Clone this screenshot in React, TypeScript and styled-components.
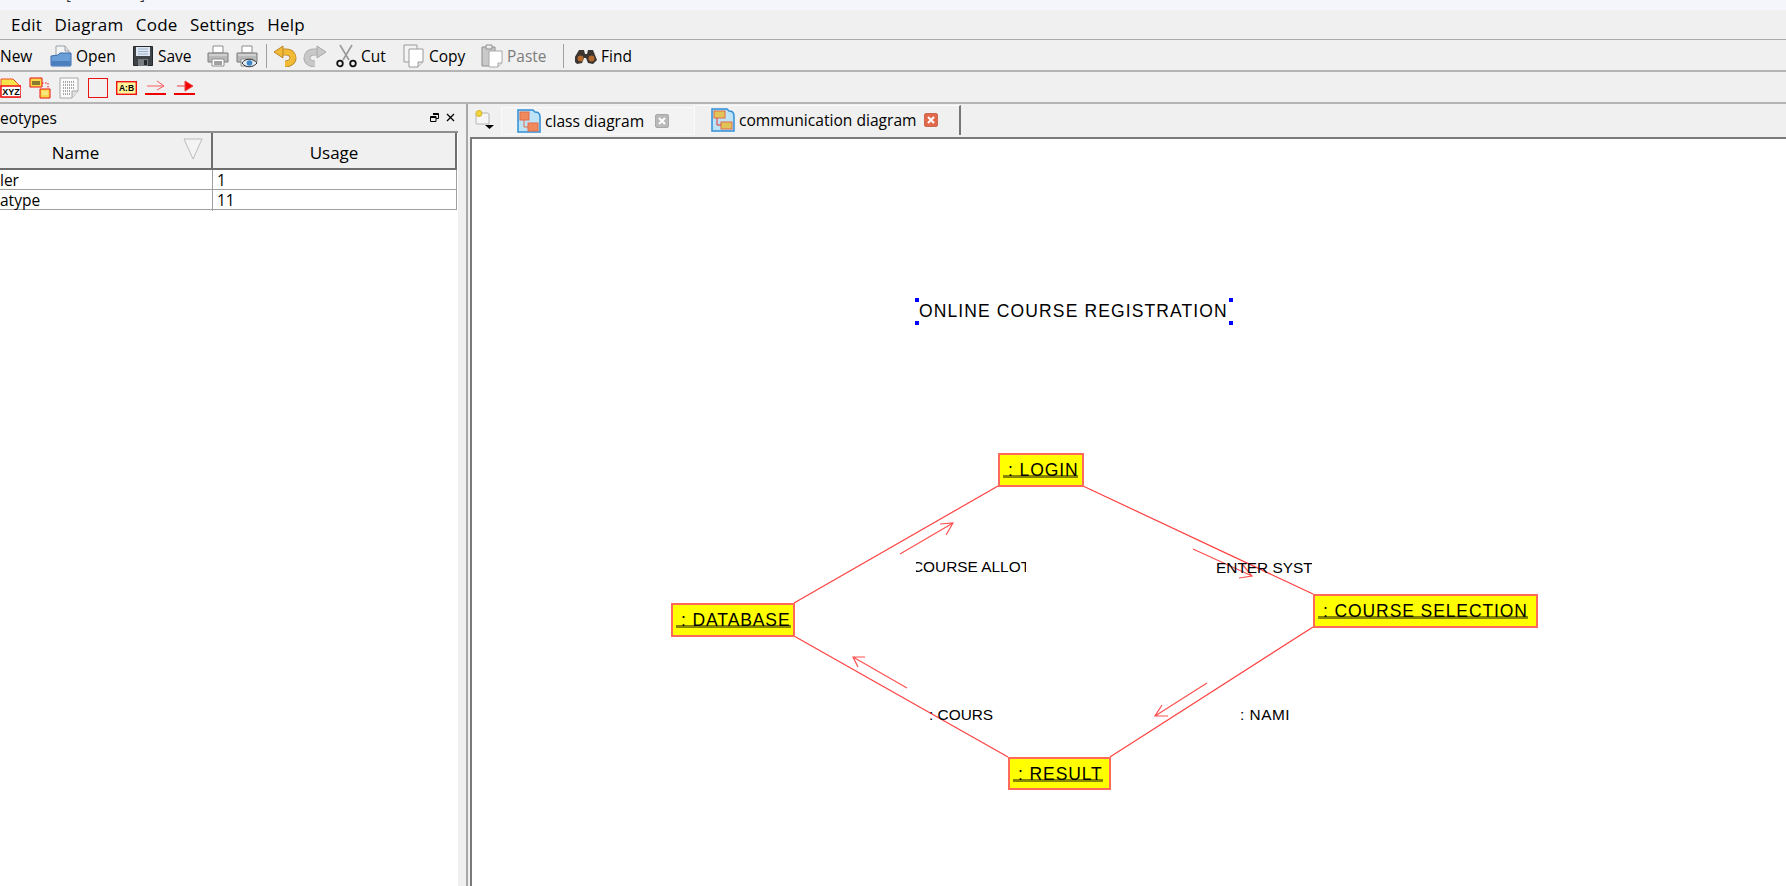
import React from 'react';
import styled, { createGlobalStyle } from 'styled-components';

const GlobalStyle = createGlobalStyle`
  *, *::before, *::after { box-sizing: border-box; }
  html, body { margin: 0; padding: 0; background: #f0f0f0; }
  body { font-family: "Open Sans", "Noto Sans", sans-serif; color: #000; overflow: hidden; }
`;

const Shell = styled.div`
  width: 1786px;
  height: 886px;
  display: flex;
  flex-direction: column;
  overflow: hidden;
`;

const TitleBar = styled.div`
  height: 10px;
  flex: none;
  background: #f5f6fb;
  padding-left: 66px;
  overflow: hidden;
  font-size: 15px;
  line-height: 4px;
  display: flex;
  gap: 69px;
  color: #333;
  span { display: block; margin-top: -9px; }
`;

const MenuBar = styled.div`
  height: 30px;
  flex: none;
  display: flex;
  align-items: center;
  padding-left: 11px;
  gap: 12.5px;
  font-size: 17px;
  letter-spacing: 0.2px;
  border-bottom: 1px solid #a9a9a9;
`;

const ToolRow = styled.div<{ $h: number }>`
  height: ${p => p.$h}px;
  flex: none;
  display: flex;
  align-items: center;
  padding-top: 2px;
  border-bottom: 2px solid #b4b4b4;
`;

const ToolButton = styled.div<{ $w: number; $off?: boolean }>`
  width: ${p => p.$w}px;
  flex: none;
  display: flex;
  align-items: center;
  gap: 4px;
  font-size: 15.5px;
  color: ${p => (p.$off ? '#7d7d7d' : '#000')};
  svg { flex: none; }
`;

const ToolSep = styled.div<{ $w: number }>`
  width: ${p => p.$w}px;
  flex: none;
  height: 24px;
  position: relative;
  &::after {
    content: '';
    position: absolute;
    left: 0;
    top: 0;
    bottom: 0;
    width: 1px;
    background: #a0a0a0;
  }
`;

const ShapeRow = styled.div`
  display: flex;
  align-items: center;
  gap: 8px;
  svg { flex: none; }
`;

const Workspace = styled.div`
  flex: 1;
  display: flex;
  min-height: 0;
`;

const SidePanel = styled.div`
  width: 458px;
  flex: none;
  display: flex;
  flex-direction: column;
`;

const PanelHeader = styled.div`
  height: 27px;
  flex: none;
  display: flex;
  align-items: center;
  justify-content: space-between;
  padding-right: 3px;
  font-size: 15.5px;
`;

const PanelButtons = styled.div`
  display: flex;
  align-items: center;
  gap: 7px;
`;

const PanelBody = styled.div`
  flex: 1;
  background: #fff;
  border-top: 2px solid #8e8e8e;
  padding-right: 1px;
`;

const TableRow = styled.div<{ $head?: boolean }>`
  display: grid;
  grid-template-columns: 213px 1fr;
  height: ${p => (p.$head ? 37 : 20)}px;
  background: ${p => (p.$head ? '#f0f0f0' : '#fff')};
  border-bottom: ${p => (p.$head ? '2px solid #6e6e6e' : '1px solid #a0a0a0')};
  border-right: ${p => (p.$head ? '2px solid #6e6e6e' : '1px solid #a0a0a0')};
  font-size: 15.5px;
`;

const HeadCell = styled.div<{ $first?: boolean }>`
  position: relative;
  display: flex;
  align-items: center;
  justify-content: center;
  padding-top: 3px;
  padding-right: ${p => (p.$first ? 60 : 0)}px;
  border-right: ${p => (p.$first ? '2px solid #6e6e6e' : 'none')};
  font-size: 17px;
  svg { position: absolute; right: 8px; top: 5px; }
`;

const BodyCell = styled.div<{ $first?: boolean }>`
  padding-left: ${p => (p.$first ? 0 : 4)}px;
  line-height: 21px;
  border-right: ${p => (p.$first ? '1px solid #a0a0a0' : 'none')};
`;

const Splitter = styled.div`
  width: 12px;
  flex: none;
  position: relative;
  &::after {
    content: '';
    position: absolute;
    left: 8px;
    top: 0;
    bottom: 0;
    width: 2px;
    background: #a8a8a8;
  }
`;

const Editor = styled.div`
  flex: 1;
  display: flex;
  flex-direction: column;
  min-width: 0;
`;

const TabStrip = styled.div`
  height: 33px;
  flex: none;
  display: flex;
  align-items: flex-end;
  padding-bottom: 2px;
`;

const NewTabButton = styled.div`
  width: 31px;
  height: 30px;
  flex: none;
  display: flex;
  align-items: center;
  padding-left: 5px;
`;

const Tab = styled.div<{ $active?: boolean; $w: number }>`
  width: ${p => p.$w}px;
  height: ${p => (p.$active ? 30 : 28)}px;
  flex: none;
  display: flex;
  align-items: center;
  padding-left: ${p => (p.$active ? 16 : 15)}px;
  padding-bottom: ${p => (p.$active ? 2 : 0)}px;
  gap: 4px;
  font-size: 15.6px;
  background: ${p => (p.$active ? '#f0f0f0' : '#f3f3f3')};
  border-left: 1px solid #fafafa;
  border-top: 1px solid #fafafa;
  border-bottom: ${p => (p.$active ? 'none' : '1px solid #fafafa')};
  border-right: ${p => (p.$active ? '2px solid #777' : 'none')};
`;

const TabClose = styled.div<{ $active?: boolean }>`
  width: 14px;
  height: 14px;
  flex: none;
  border-radius: 2px;
  background: ${p => (p.$active ? '#e2694a' : '#b9b9b9')};
  border: 1px solid ${p => (p.$active ? '#c9694f' : '#a8a8a8')};
  display: flex;
  align-items: center;
  justify-content: center;
  margin-left: ${p => (p.$active ? 3 : 7)}px;
`;

const Canvas = styled.div`
  flex: 1;
  position: relative;
  background: #fff;
  border-top: 2px solid #7a7a7a;
  border-left: 2px solid #7a7a7a;
  overflow: hidden;
`;

// canvas origin in page coordinates, the diagram numbers below are taken from the picture
const OX = 472;
const OY = 139;

const Wires = styled.svg`
  position: absolute;
  left: 0;
  top: 0;
`;

const Node = styled.div<{ $x: number; $y: number; $w: number; $h: number }>`
  position: absolute;
  left: ${p => p.$x - OX}px;
  top: ${p => p.$y - OY}px;
  width: ${p => p.$w}px;
  height: ${p => p.$h}px;
  background: #ffff00;
  border: 2px solid #ff6a5a;
  padding-left: 3px;
  font-family: "Liberation Sans", Arial, sans-serif;
  font-size: 17.5px;
  letter-spacing: 0.9px;
  line-height: 30px;
  white-space: nowrap;
  overflow: hidden;
`;

const NodeName = styled.span`
  display: inline-block;
  vertical-align: top;
  padding-left: 5px;
  height: 23px;
  border-bottom: 3px solid #858500;
`;

const Caption = styled.div`
  position: absolute;
  left: ${919 - OX}px;
  top: ${299 - OY}px;
  font-family: "Liberation Sans", Arial, sans-serif;
  font-size: 17.5px;
  letter-spacing: 1.12px;
  line-height: 24px;
  white-space: nowrap;
`;

const Handle = styled.div<{ $x: number; $y: number }>`
  position: absolute;
  left: ${p => p.$x - OX}px;
  top: ${p => p.$y - OY}px;
  width: 4px;
  height: 4px;
  background: #0000ff;
`;

const Message = styled.div<{ $x: number; $y: number; $w: number; $track?: number }>`
  position: absolute;
  left: ${p => p.$x - OX}px;
  top: ${p => p.$y - OY}px;
  width: ${p => p.$w}px;
  height: 20px;
  overflow: hidden;
  font-family: "Liberation Sans", Arial, sans-serif;
  font-size: 15.4px;
  letter-spacing: ${p => p.$track ?? 0}px;
  line-height: 20px;
  white-space: nowrap;
`;

const ClippedStart = styled.span`
  margin-left: -4px;
`;

const OpenIcon = () => (
  <svg width="22" height="24" viewBox="0 0 22 24">
    <path d="M6 2h9l4 5v6H6z" fill="#f4f4f4" stroke="#9aa0a8" />
    <path d="M15 2v5h4" fill="#dfe3e8" stroke="#9aa0a8" />
    <path d="M1 12l7-1 2-2 11 0v12a1 1 0 0 1-1 1H2a1 1 0 0 1-1-1z" fill="#6a9ed6" stroke="#3a6cae" />
    <path d="M2 17h18v4H2z" fill="#4a7fbe" />
  </svg>
);

const SaveIcon = () => (
  <svg width="21" height="22" viewBox="0 0 21 22">
    <path d="M.5 1.500h19v19H.5z" fill="#3e4348" stroke="#26292c" />
    <path d="M3 2h14v9H3z" fill="#dfe7f2" />
    <path d="M5 4h10M5 6.500h10M5 9h10" stroke="#9db4d0" />
    <path d="M5 14h10v7H5z" fill="#787d83" />
    <path d="M11 15h3v5h-3z" fill="#25282b" />
  </svg>
);

const PrintIcon = ({ eye }: { eye?: boolean }) => (
  <svg width="24" height="24" viewBox="0 0 24 24">
    <path d="M7 2h10v7H7z" fill="#fff" stroke="#8d8d8d" />
    <path d="M2 9h20v9H2z" fill="#b9b9b9" stroke="#7c7c7c" />
    <path d="M3 11h18" stroke="#e6e6e6" />
    <path d="M6 15h12v7H6z" fill="#fff" stroke="#8d8d8d" />
    <path d="M8 18h8M8 20h8" stroke="#444" />
    {eye && (
      <>
        <path d="M7 19c3-5 11-5 15 0-4 5-12 5-15 0z" fill="#dfeaf5" stroke="#333" />
        <circle cx="14.500" cy="19" r="2.800" fill="#3e86c6" />
      </>
    )}
  </svg>
);

const TurnIcon = ({ flip, off }: { flip?: boolean; off?: boolean }) => (
  <svg width="24" height="22" viewBox="0 0 24 22" fill="none" style={flip ? { transform: 'scaleX(-1)' } : undefined}>
    <path d="M10 7h3c5 0 7 3 7 6s-3 6-8 6" stroke={off ? '#a8a8a8' : '#b9852a'} strokeWidth="7" />
    <path d="M10 7h3c5 0 7 3 7 6s-3 6-8 6" stroke={off ? '#c8c8c8' : '#f2bb35'} strokeWidth="5.400" />
    <path d="M1 7l9-6v12z" fill={off ? '#c8c8c8' : '#f2bb35'} stroke={off ? '#a8a8a8' : '#b9852a'} />
  </svg>
);

const CutIcon = () => (
  <svg width="22" height="24" viewBox="0 0 22 24" fill="none">
    <path d="M5 1l9 15M17 1l-9 15" stroke="#9a9a9a" strokeWidth="1.600" />
    <circle cx="5" cy="19.500" r="2.800" stroke="#111" strokeWidth="1.800" />
    <circle cx="18" cy="19.500" r="2.800" stroke="#111" strokeWidth="1.800" />
  </svg>
);

const CopyIcon = () => (
  <svg width="22" height="24" viewBox="0 0 22 24">
    <path d="M1 1h13v17H1z" fill="#f4f4f4" stroke="#9a9a9a" />
    <path d="M6 5h14v13l-5 5H6z" fill="#fff" stroke="#9a9a9a" />
    <path d="M15 23v-5h5" fill="#e3e3e3" stroke="#9a9a9a" />
  </svg>
);

const PasteIcon = () => (
  <svg width="22" height="24" viewBox="0 0 22 24">
    <path d="M1 3h13v19H1z" fill="#c9c9c9" stroke="#8f8f8f" />
    <path d="M5 1h6v4H5z" fill="#ececec" stroke="#8f8f8f" />
    <path d="M8 7h13v12l-4 4H8z" fill="#fff" stroke="#a8a8a8" />
    <path d="M17 23v-4h4" fill="#e3e3e3" stroke="#a8a8a8" />
  </svg>
);

const FindIcon = () => (
  <svg width="22" height="16" viewBox="0 0 22 16">
    <path d="M4 2h5l1 4h2l1-4h5l4 10-4 4-5-1-2-5h-2l-2 5-5 1-4-4z" fill="#3a3531" />
    <circle cx="5.500" cy="10.500" r="3" fill="#b46a2c" />
    <circle cx="16.500" cy="10.500" r="3" fill="#b46a2c" />
  </svg>
);

const ObjectShape = () => (
  <svg width="21" height="20" viewBox="0 0 21 20">
    <path d="M1 1h12l7 7v11H1z" fill="#f7e44a" stroke="#f04a2a" />
    <path d="M1 8h20v11H1z" fill="#fff" stroke="#f01010" strokeWidth="1.500" />
    <text x="11" y="17" textAnchor="middle" fontFamily="Liberation Sans" fontWeight="700" fontSize="9">XYZ</text>
  </svg>
);

const LinkedShape = () => (
  <svg width="22" height="22" viewBox="0 0 22 22">
    <path d="M1 1h12v9H1z" fill="#f5d94a" stroke="#f01010" />
    <path d="M11 12h10v9H11z" fill="#f5d94a" stroke="#f01010" />
    <path d="M3 4h8v4H3z" fill="#8a7a30" />
    <path d="M13 15h6M13 17h6" stroke="#fff5b0" />
    <path d="M13 6h6v6" fill="none" stroke="#f01010" strokeDasharray="1.500 1.500" />
  </svg>
);

const NoteShape = () => (
  <svg width="21" height="22" viewBox="0 0 21 22">
    <path d="M1 1h18v13l-6 7H1z" fill="#fafafa" stroke="#a8a8a8" />
    <path d="M13 21v-7h6" fill="#e1e1e1" stroke="#a8a8a8" />
    <path d="M4 5h11M4 8h11M4 11h11M4 14h7M4 17h7" stroke="#555" strokeDasharray="1 1" />
  </svg>
);

const BoxShape = () => (
  <svg width="20" height="20" viewBox="0 0 20 20">
    <rect x="0.500" y="0.500" width="19" height="19" fill="none" stroke="#f01010" />
  </svg>
);

const RoleShape = () => (
  <svg width="21" height="14" viewBox="0 0 21 14">
    <rect x="0.700" y="0.700" width="19.600" height="12.600" fill="#fff59a" stroke="#f01010" strokeWidth="1.400" />
    <text x="10.500" y="10" textAnchor="middle" fontFamily="Liberation Sans" fontWeight="700" fontSize="8.500">A:B</text>
  </svg>
);

const ArrowShape = ({ filled }: { filled?: boolean }) => (
  <svg width="21" height="16" viewBox="0 0 21 16" fill="none">
    {filled ? (
      <path d="M3 6h9M11 1l8 5-8 5z" fill="#f00000" stroke="#f04040" />
    ) : (
      <path d="M2 6h17M12 1l7 5-7 4" stroke="#ff5a5a" />
    )}
    <path d="M0 14h21" stroke="#f00000" strokeWidth="2" />
  </svg>
);

const DiagramTabIcon = ({ comm }: { comm?: boolean }) => (
  <svg width="24" height="24" viewBox="0 0 24 24">
    <path d="M1 1h15l2 2c3 0 5 2 5 5v15H1z" fill="#bfe3f6" stroke="#2f8fd6" strokeWidth="1.500" />
    {comm ? (
      <>
        <rect x="3" y="3" width="11" height="7" fill="#e0c458" stroke="#e26a4a" />
        <rect x="10" y="14" width="11" height="7" fill="#e0c458" stroke="#e26a4a" />
        <path d="M6 10v7h4" fill="none" stroke="#e23030" />
      </>
    ) : (
      <>
        <rect x="3" y="3" width="9" height="8" fill="#f08a5a" stroke="#e26a4a" />
        <rect x="11" y="14" width="10" height="8" fill="#f08a5a" stroke="#e26a4a" />
        <path d="M7 11v7h4" fill="none" stroke="#e26a4a" />
      </>
    )}
  </svg>
);

const NewDiagramIcon = () => (
  <svg width="20" height="20" viewBox="0 0 20 20">
    <path d="M2 3h11a2 2 0 0 1 1 2v9H2a1 1 0 0 1-1-1V4a1 1 0 0 1 1-1z" fill="#f6f6f6" stroke="#b4b4b4" />
    <circle cx="4" cy="3.500" r="3" fill="#f2d43c" stroke="#d7b52a" />
    <path d="M10 15h9l-4.500 4z" fill="#000" />
  </svg>
);

const CloseGlyph = () => (
  <svg width="8" height="8" viewBox="0 0 8 8">
    <path d="M1 1l6 6M7 1l-6 6" stroke="#fff" strokeWidth="2" />
  </svg>
);

const FloatIcon = () => (
  <svg width="9" height="9" viewBox="0 0 9 9" fill="none" stroke="#000">
    <path d="M3 .5h5.500v5h-2.500" />
    <path d="M3 1.500h5.500" />
    <path d="M.5 3.500h5.500v5h-5.500z" />
    <path d="M.5 4.500h5.500" />
  </svg>
);

const DockCloseIcon = () => (
  <svg width="9" height="9" viewBox="0 0 9 9" fill="none" stroke="#000" strokeWidth="1.300">
    <path d="M1 1l7 7M8 1l-7 7" />
  </svg>
);

const SortMark = () => (
  <svg width="20" height="22" viewBox="0 0 20 22" fill="none">
    <path d="M1 1h18l-9 20z" fill="#f4f4f4" stroke="#bcbcbc" />
  </svg>
);

const links = [
  [998, 486, 794, 603],
  [1083, 486, 1313, 594],
  [794, 636, 1008, 757],
  [1313, 627, 1110, 757],
];

const arrows = [
  'M900 554L953 523M940 524L953 523L946 535',
  'M1193 549L1252 576M1239 578L1252 576L1243 565',
  'M907 688L853 657M865 657L853 657L858 667',
  'M1207 683L1155 716M1162 705L1155 716L1168 716',
];

const nodes = [
  { x: 998, y: 453, w: 86, h: 34, label: ': LOGIN' },
  { x: 671, y: 603, w: 124, h: 34, label: ': DATABASE' },
  { x: 1313, y: 594, w: 225, h: 34, label: ': COURSE SELECTION' },
  { x: 1008, y: 757, w: 103, h: 33, label: ': RESULT' },
];

const handles = [
  [915, 298],
  [1229, 298],
  [915, 321],
  [1229, 321],
];

export default function App() {
  return (
    <Shell>
      <GlobalStyle />
      <TitleBar>
        <span>[</span>
        <span>]</span>
      </TitleBar>
      <MenuBar>
        <span>Edit</span>
        <span>Diagram</span>
        <span>Code</span>
        <span>Settings</span>
        <span>Help</span>
      </MenuBar>
      <ToolRow $h={32}>
        <ToolButton $w={50}>New</ToolButton>
        <ToolButton $w={83}>
          <OpenIcon />
          Open
        </ToolButton>
        <ToolButton $w={73}>
          <SaveIcon />
          Save
        </ToolButton>
        <ToolButton $w={29}>
          <PrintIcon />
        </ToolButton>
        <ToolButton $w={31}>
          <PrintIcon eye />
        </ToolButton>
        <ToolSep $w={7} />
        <ToolButton $w={30}>
          <TurnIcon />
        </ToolButton>
        <ToolButton $w={32}>
          <TurnIcon flip off />
        </ToolButton>
        <ToolButton $w={68}>
          <CutIcon />
          Cut
        </ToolButton>
        <ToolButton $w={78}>
          <CopyIcon />
          Copy
        </ToolButton>
        <ToolButton $w={82} $off>
          <PasteIcon />
          Paste
        </ToolButton>
        <ToolSep $w={12} />
        <ToolButton $w={70}>
          <FindIcon />
          Find
        </ToolButton>
      </ToolRow>
      <ToolRow $h={32}>
        <ShapeRow>
          <ObjectShape />
          <LinkedShape />
          <NoteShape />
          <BoxShape />
          <RoleShape />
          <ArrowShape />
          <ArrowShape filled />
        </ShapeRow>
      </ToolRow>
      <Workspace>
        <SidePanel>
          <PanelHeader>
            <span>eotypes</span>
            <PanelButtons>
              <FloatIcon />
              <DockCloseIcon />
            </PanelButtons>
          </PanelHeader>
          <PanelBody>
            <TableRow $head>
              <HeadCell $first>
                Name
                <SortMark />
              </HeadCell>
              <HeadCell>Usage</HeadCell>
            </TableRow>
            <TableRow>
              <BodyCell $first>ler</BodyCell>
              <BodyCell>1</BodyCell>
            </TableRow>
            <TableRow>
              <BodyCell $first>atype</BodyCell>
              <BodyCell>11</BodyCell>
            </TableRow>
          </PanelBody>
        </SidePanel>
        <Splitter />
        <Editor>
          <TabStrip>
            <NewTabButton>
              <NewDiagramIcon />
            </NewTabButton>
            <Tab $w={193}>
              <DiagramTabIcon />
              class diagram
              <TabClose>
                <CloseGlyph />
              </TabClose>
            </Tab>
            <Tab $w={267} $active>
              <DiagramTabIcon comm />
              communication diagram
              <TabClose $active>
                <CloseGlyph />
              </TabClose>
            </Tab>
          </TabStrip>
          <Canvas>
            <Wires width="1315" height="750" viewBox={`${OX} ${OY} 1315 750`} fill="none">
              {links.map(([a, b, c, d]) => (
                <line key={`${a}-${b}`} x1={a} y1={b} x2={c} y2={d} stroke="#ff4040" strokeWidth="1.200" />
              ))}
              {arrows.map(d => (
                <path key={d} d={d} stroke="#ff5050" strokeWidth="1.200" />
              ))}
            </Wires>
            <Caption>ONLINE COURSE REGISTRATION</Caption>
            {handles.map(([x, y]) => (
              <Handle key={`${x}-${y}`} $x={x} $y={y} />
            ))}
            <Message $x={916} $y={557} $w={110}>
              <ClippedStart>COURSE ALLOT</ClippedStart>
            </Message>
            <Message $x={1216} $y={558} $w={96}>
              ENTER SYST
            </Message>
            <Message $x={929} $y={705} $w={70}>
              : COURS
            </Message>
            <Message $x={1240} $y={705} $w={56} $track={0.5}>
              : NAMI
            </Message>
            {nodes.map(n => (
              <Node key={n.label} $x={n.x} $y={n.y} $w={n.w} $h={n.h}>
                <NodeName>{n.label}</NodeName>
              </Node>
            ))}
          </Canvas>
        </Editor>
      </Workspace>
    </Shell>
  );
}
